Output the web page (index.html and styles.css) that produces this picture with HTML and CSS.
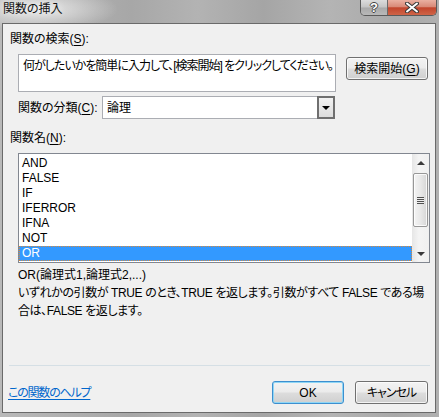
FILE: index.html
```html
<!DOCTYPE html>
<html lang="ja">
<head>
<meta charset="utf-8">
<title>関数の挿入</title>
<link rel="stylesheet" href="styles.css">
</head>
<body>
<div class="window">
  <div class="titlebar">
    <span class="title">関数の挿入</span>
    <div class="caption-buttons">
      <div class="cap help">?</div>
      <div class="cap close">
        <svg width="14" height="11" viewBox="0 0 14 11">
          <path d="M2 1.5 L12 9.5 M12 1.5 L2 9.5" stroke="#3a3a3a" stroke-width="4" stroke-linecap="round"/>
          <path d="M2 1.5 L12 9.5 M12 1.5 L2 9.5" stroke="#ffffff" stroke-width="2" stroke-linecap="round"/>
        </svg>
      </div>
    </div>
  </div>
  <div class="client">
    <div class="label label-search">関数の検索(<u>S</u>):</div>
    <div class="search-row">
      <div class="textbox">何がしたいかを簡単に入力して、[検索開始] をクリックしてください。</div>
      <button class="btn btn-search">検索開始(<u>G</u>)</button>
    </div>
    <div class="cat-row">
      <span class="label cat-label">関数の分類(<u>C</u>):</span>
      <div class="combo">
        <span class="combo-text">論理</span>
        <span class="combo-btn"><span class="tri-down"></span></span>
      </div>
    </div>
    <div class="label label-name">関数名(<u>N</u>):</div>
    <div class="listbox">
      <ul class="items">
        <li>AND</li>
        <li>FALSE</li>
        <li>IF</li>
        <li>IFERROR</li>
        <li>IFNA</li>
        <li>NOT</li>
        <li class="selected">OR</li>
      </ul>
      <div class="scrollbar">
        <div class="sb-arrow"><span class="tri-up small"></span></div>
        <div class="sb-track">
          <div class="sb-thumb"><span class="grip"></span></div>
        </div>
        <div class="sb-arrow"><span class="tri-down small"></span></div>
      </div>
    </div>
    <div class="syntax">OR(論理式1,論理式2,...)</div>
    <div class="desc">いずれかの引数が TRUE のとき、TRUE を返します。引数がすべて FALSE である場<br>合は、FALSE を返します。</div>
    <div class="sep"></div>
    <div class="footer">
      <a class="help-link" href="#">この関数のヘルプ</a>
      <div class="footer-buttons">
        <button class="btn btn-ok">OK</button>
        <button class="btn btn-cancel">キャンセル</button>
      </div>
    </div>
  </div>
</div>
</body>
</html>
```

FILE: styles.css
```css
* { box-sizing: border-box; }
html, body {
  margin: 0;
  padding: 0;
}
body {
  width: 439px;
  height: 417px;
  overflow: hidden;
  font-family: "Liberation Sans", "Noto Sans CJK JP", sans-serif;
  font-size: 12px;
  font-feature-settings: "palt";
  color: #000;
}
.window {
  width: 439px;
  height: 417px;
  display: flex;
  flex-direction: column;
  background:
    radial-gradient(ellipse 80px 22px at 38px 9px, rgba(236,236,236,0.95), rgba(236,236,236,0) 100%),
    linear-gradient(to right, #b9b9b9 0%, #a7a7a7 30%, #b3b3b3 45%, #a5a5a5 60%, #b4b4b4 75%, #a9a9a9 90%, #b0b0b0 100%);
}
.titlebar {
  height: 23px;
  display: flex;
  align-items: flex-start;
  flex: none;
}
.title {
  padding-left: 3px;
  padding-top: 1px;
  line-height: 16px;
  font-size: 12px;
  color: #111;
  text-shadow: 0 0 6px rgba(255,255,255,0.9);
}
.caption-buttons {
  margin-left: auto;
  margin-right: 2px;
  display: flex;
  height: 16px;
  border: 1px solid #5a5a5a;
  border-top: none;
  border-radius: 0 0 5px 5px;
  overflow: hidden;
}
.cap {
  height: 15px;
  display: flex;
  align-items: center;
  justify-content: center;
}
.help {
  width: 27px;
  border-right: 1px solid #6a6a6a;
  background: linear-gradient(#dcdcdc 0%, #c4c4c4 48%, #a9a9a9 52%, #b9b9b9 100%);
  color: #fff;
  font-family: "Liberation Sans", sans-serif;
  font-weight: bold;
  font-size: 13px;
  line-height: 15px;
  text-shadow: -1px 0 #444, 1px 0 #444, 0 -1px #444, 0 1px #444;
}
.close {
  width: 48px;
  background: linear-gradient(#eab0a2 0%, #d98a78 45%, #c2452d 52%, #cf6447 100%);
}
.client {
  flex: 1;
  margin: 0 3px 4px 2px;
  border: 1px solid #6a6a6a;
  background: #f0f0f0;
  display: flex;
  flex-direction: column;
}
.label {
  line-height: 16px;
}
.label u { text-decoration-thickness: 1px; text-underline-offset: 2px; }
.label-search {
  margin: 7px 0 0 7px;
}
.search-row {
  margin-top: 7px;
  padding-left: 15px;
  display: flex;
  align-items: flex-start;
  gap: 10px;
}
.textbox {
  width: 318px;
  height: 38px;
  background: #fff;
  border: 1px solid #abadb3;
  padding: 3px 0 0 4px;
  line-height: 16px;
  white-space: nowrap;
  overflow: hidden;
  letter-spacing: -1px;
}
.btn {
  font: inherit;
  font-feature-settings: "palt";
  color: #000;
  height: 23px;
  padding: 0;
  border: 1px solid #707070;
  border-radius: 3px;
  background: linear-gradient(#f3f3f3 0%, #ebebeb 48%, #dddddd 52%, #cfcfcf 100%);
  box-shadow: inset 0 0 0 1px rgba(255,255,255,0.75);
  line-height: 16px;
}
.btn u { text-underline-offset: 2px; }
.btn-search {
  width: 82px;
  margin-top: 3px;
}
.cat-row {
  margin-top: 4px;
  padding-left: 15px;
  display: flex;
  align-items: center;
}
.cat-label {
  width: 84px;
}
.combo {
  width: 233px;
  height: 23px;
  border: 1px solid #abadb3;
  background: #fff;
  display: flex;
  align-items: center;
}
.combo-text {
  padding-left: 4px;
  flex: 1;
  line-height: 16px;
}
.combo-btn {
  width: 18px;
  height: 23px;
  margin-right: -1px;
  border: 2px solid #6f6f6f;
  background: linear-gradient(#f2f2f2, #dcdcdc);
  display: flex;
  align-items: center;
  justify-content: center;
}
.tri-down {
  width: 0;
  height: 0;
  border-left: 4px solid transparent;
  border-right: 4px solid transparent;
  border-top: 4px solid #000;
}
.tri-up {
  width: 0;
  height: 0;
  border-left: 4px solid transparent;
  border-right: 4px solid transparent;
  border-bottom: 4px solid #3a3a3a;
}
.tri-down.small { border-top-color: #3a3a3a; }
.label-name {
  margin: 11px 0 0 7px;
}
.listbox {
  margin: 7px 0 0 15px;
  width: 412px;
  height: 110px;
  border: 1px solid #828790;
  background: #fff;
  display: flex;
}
.items {
  list-style: none;
  margin: 0;
  padding: 2px 0 0 0;
  flex: 1;
}
.items li {
  height: 15px;
  line-height: 15px;
  padding-left: 3px;
}
.items li.selected {
  background: #3399ff;
  color: #fff;
  outline: 1px dotted #d8883a;
  outline-offset: -1px;
}
.scrollbar {
  width: 17px;
  display: flex;
  flex-direction: column;
  background: linear-gradient(to right, #e6e6e6, #f4f4f4 40%, #f0f0f0);
}
.sb-arrow {
  height: 17px;
  display: flex;
  align-items: center;
  justify-content: center;
}
.sb-track {
  flex: 1;
  padding-top: 2px;
}
.sb-thumb {
  margin: 0 1px;
  height: 54px;
  border: 1px solid #979797;
  border-radius: 2px;
  background: linear-gradient(to right, #f4f4f4, #e8e8e8 50%, #d6d6d6 100%);
  box-shadow: inset 0 0 0 1px rgba(255,255,255,0.8);
  display: flex;
  align-items: center;
  justify-content: center;
}
.grip {
  width: 7px;
  height: 7px;
  background: repeating-linear-gradient(#505050 0 1px, #eeeeee 1px 2px);
}
.syntax {
  margin: 3px 0 0 15px;
  line-height: 18px;
}
.desc {
  margin-left: 15px;
  line-height: 18px;
  white-space: nowrap;
  letter-spacing: -0.4px;
}
.sep {
  margin: 45px 0 0 6px;
  width: 421px;
  height: 1px;
  background: #d5dfe5;
}
.footer {
  margin-top: 15px;
  padding: 0 7px 0 5px;
  height: 23px;
  display: flex;
  align-items: center;
}
.help-link {
  color: #0066cc;
  text-decoration: underline;
  text-underline-offset: 2px;
  line-height: 16px;
  letter-spacing: -1.2px;
}
.footer-buttons {
  margin-left: auto;
  display: flex;
  gap: 11px;
}
.btn-ok {
  width: 72px;
  border-color: #3c8fcf;
  box-shadow: inset 0 0 0 1px #8fd6f5;
}
.btn-cancel {
  width: 73px;
  letter-spacing: -1px;
}
```
